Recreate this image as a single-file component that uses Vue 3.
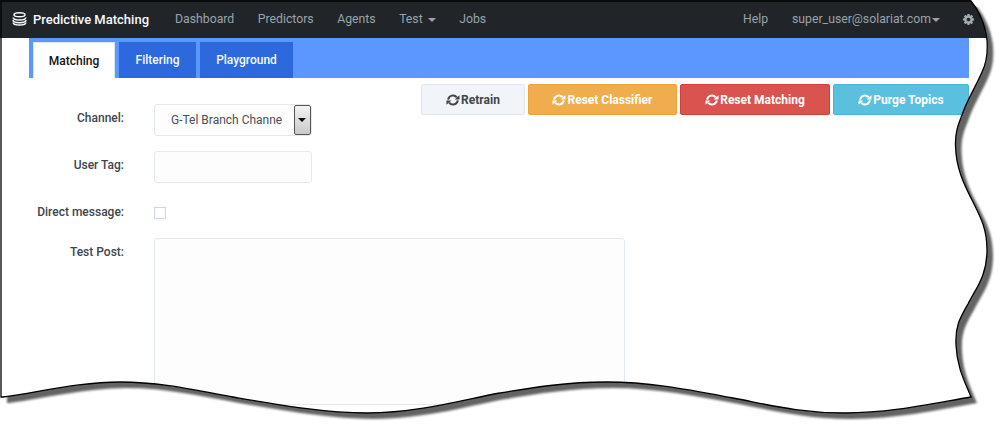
<script setup>
const navItems = [
  { label: 'Dashboard' },
  { label: 'Predictors' },
  { label: 'Agents' },
  { label: 'Test', caret: true },
  { label: 'Jobs' }
]

const tabs = ['Matching', 'Filtering', 'Playground']

const actions = [
  { label: 'Retrain', kind: 'light' },
  { label: 'Reset Classifier', kind: 'warning' },
  { label: 'Reset Matching', kind: 'danger' },
  { label: 'Purge Topics', kind: 'info' }
]

// torn paper edge of the screenshot, right side then bottom
const edge =
  'L971 1 C977 8 985 22 987 40 C988 54 986 64 982 72 C976 86 967 100 962 115 C958 125 955 133 955.500 146 C956 170 966 188 972 200 C980 216 987 228 987 250 C987 276 976 288 968 304 C960 318 955 326 956 345 C957 368 965 382 971 397 C930 404 890 413 845 413 C800 413 770 405 733 398 C690 390 650 382 607 382 C565 382 530 388 500 393 C470 398 420 413 367 413 C325 413 280 405 233 397 C195 390 160 382 120 382 C80 382 40 392 3 397'
const pagePath = `M1 1 ${edge} L1 397 Z`
const outerPath = `M971 0 ${edge} L0 397 L0 430 L1004 430 L1004 0 Z`
</script>

<template>
  <div class="shot">
    <header class="navbar">
      <div class="brand">
        <svg class="brand-icon" viewBox="0 0 15 14" width="15" height="14">
          <g fill="none" stroke="#f8f9fa" stroke-width="1.500">
            <ellipse cx="7.500" cy="2.800" rx="5.500" ry="2" />
            <path d="M1.200 5.500c0 1.500 2.800 2.500 6.300 2.500s6.300-1 6.300-2.500" />
            <path d="M1 8c0 1.600 2.900 2.700 6.500 2.700S14 9.600 14 8" />
            <path d="M1.200 10.500c0 1.500 2.800 2.500 6.300 2.500s6.300-1 6.300-2.500" />
          </g>
        </svg>
        <span>Predictive Matching</span>
      </div>
      <nav class="nav-links">
        <span v-for="item in navItems" :key="item.label" class="nav-link">
          {{ item.label }}<i v-if="item.caret" class="caret"></i>
        </span>
      </nav>
      <div class="nav-right">
        <span class="nav-link">Help</span>
        <span class="nav-link user">super_user@solariat.com<i class="caret tight"></i></span>
        <svg class="gear" viewBox="0 0 1792 1792" width="13" height="13">
          <path
            fill="#a4abb3"
            d="M1152 896q0-106-75-181t-181-75-181 75-75 181 75 181 181 75 181-75 75-181zm512-109v222q0 12-8 23t-20 13l-185 28q-19 54-39 91 35 50 107 138 10 12 10 25t-9 23q-27 37-99 108t-94 71q-12 0-26-9l-138-108q-44 23-91 38-16 136-29 186-7 28-36 28h-222q-14 0-24.500-8.500t-11.500-21.500l-28-184q-49-16-90-37l-141 107q-10 9-25 9-14 0-25-11-126-114-165-168-7-10-7-23 0-12 8-23 15-21 51-66.500t54-70.500q-27-50-41-99l-183-27q-13-2-21-12.500t-8-23.500v-222q0-12 8-23t19-13l186-28q14-46 39-92-40-57-107-138-10-12-10-24 0-10 9-23 26-36 98.500-107.500t94.500-71.500q13 0 26 10l138 107q44-23 91-38 16-136 29-186 7-28 36-28h222q14 0 24.500 8.500t11.500 21.500l28 184q49 16 90 37l142-107q9-9 24-9 13 0 25 10 129 119 165 170 7 8 7 22 0 12-8 23-15 21-51 66.500t-54 70.500q26 50 41 98l183 28q13 2 21 12.500t8 23.500z"
          />
        </svg>
      </div>
    </header>

    <main class="content">
      <div class="tab-bar">
        <button
          v-for="(tab, index) in tabs"
          :key="tab"
          type="button"
          :class="['tab', { active: index === 0 }]"
        >
          {{ tab }}
        </button>
      </div>

      <div class="actions">
        <button
          v-for="action in actions"
          :key="action.label"
          type="button"
          :class="['action', action.kind]"
        >
          <svg viewBox="0 0 14 14" width="14" height="14">
            <g fill="none" stroke="currentColor" stroke-width="2">
              <path d="M2.200 6.600A4.800 4.800 0 0 1 10.800 4.400" />
              <path d="M11.800 7.400A4.800 4.800 0 0 1 3.200 9.600" />
            </g>
            <path fill="currentColor" d="M8.600 6.500H13.500V2.200zM5.400 7.500H.500V11.800z" />
          </svg>
          {{ action.label }}
        </button>
      </div>

      <form class="form">
        <label class="label channel-label">Channel:</label>
        <div class="select">
          <span class="select-text">G-Tel Branch Channel</span>
          <span class="select-btn"><i></i></span>
        </div>

        <label class="label tag-label">User Tag:</label>
        <input class="field tag-input" type="text" />

        <label class="label dm-label">Direct message:</label>
        <input class="check" type="checkbox" />

        <label class="label post-label">Test Post:</label>
        <textarea class="field post-input"></textarea>
      </form>
    </main>

    <svg class="torn" width="1004" height="430" viewBox="0 0 1004 430">
      <defs>
        <filter id="blur" x="-5%" y="-5%" width="110%" height="110%">
          <feGaussianBlur stdDeviation="1.100" />
        </filter>
        <clipPath id="outside">
          <path :d="outerPath" />
        </clipPath>
      </defs>
      <path :d="outerPath" fill="#fff" />
      <g clip-path="url(#outside)">
        <path :d="pagePath" transform="translate(6 6)" fill="#636363" filter="url(#blur)" />
      </g>
      <path :d="pagePath" fill="none" stroke="#000" stroke-width="1.300" />
    </svg>
  </div>
</template>

<style>
html,
body {
  margin: 0;
  background: #fff;
  overflow: hidden;
}
</style>

<style scoped>
.shot {
  position: relative;
  width: 1004px;
  height: 430px;
  overflow: hidden;
  background: #fff;
  font-family: Roboto, "Liberation Sans", sans-serif;
  font-size: 12px;
}

.navbar {
  display: flex;
  align-items: center;
  height: 38px;
  padding: 0 29px 0 12px;
  background: #212529;
  color: #9aa3ab;
  font-size: 12.250px;
}

.brand {
  display: flex;
  align-items: center;
  gap: 6px;
  color: #f8f9fa;
  font-size: 13px;
  font-weight: 500;
}

.nav-links {
  display: flex;
  gap: 23.500px;
  margin-left: 26px;
}

.nav-right {
  display: flex;
  align-items: center;
  margin-left: auto;
}

.user {
  margin-left: 24px;
}

.gear {
  margin-left: 22px;
}

.caret {
  display: inline-block;
  margin-left: 5px;
  vertical-align: middle;
  border-top: 4px solid #9aa3ab;
  border-left: 4px solid transparent;
  border-right: 4px solid transparent;
}

.caret.tight {
  margin-left: 1px;
}

.content {
  padding: 0 35px 0 29px;
}

.tab-bar {
  display: flex;
  gap: 4px;
  align-items: flex-end;
  height: 40px;
  padding-left: 4px;
  background: #5b97ff;
}

.tab {
  width: 77px;
  height: 36px;
  padding: 0;
  border: 0;
  background: #2d69dc;
  color: #f8f9fa;
  font: 500 12px Roboto, "Liberation Sans", sans-serif;
}

.tab:last-child {
  width: 93px;
}

.tab.active {
  width: 82px;
  background: #fff;
  border: 1px solid #dee6f2;
  border-bottom: 0;
  color: #111;
}

.actions {
  display: flex;
  justify-content: flex-end;
  gap: 3px;
  margin-top: 6px;
  height: 31px;
}

.action {
  display: flex;
  align-items: center;
  justify-content: center;
  gap: 1px;
  height: 31px;
  padding: 0;
  border: 1px solid;
  border-radius: 2px;
  color: #fff;
  font: 700 12px Roboto, "Liberation Sans", sans-serif;
}

.action.light {
  width: 104px;
  background: #f1f4f8;
  border-color: #dfe5ec;
  color: #3f454b;
}

.action.warning {
  width: 149px;
  background: #f0ad4e;
  border-color: #eea236;
}

.action.danger {
  width: 150px;
  background: #d9534f;
  border-color: #d43f3a;
}

.action.info {
  width: 136px;
  background: #5bc0de;
  border-color: #46b8da;
}

.form {
  display: grid;
  grid-template-columns: 95px 158px 313px;
  column-gap: 30px;
  align-items: start;
  margin-top: -11px;
}

.label {
  grid-column: 1;
  color: #3f454b;
  font-weight: 500;
  line-height: 14px;
  text-align: right;
  white-space: nowrap;
}

.channel-label {
  padding-top: 7px;
}

.tag-label {
  padding-top: 7px;
}

.dm-label {
  padding-top: 1px;
}

.post-label {
  padding-top: 7px;
}

.select {
  grid-column: 2;
  position: relative;
  box-sizing: border-box;
  height: 32px;
  margin-bottom: 15px;
  padding: 0 29px 0 16px;
  border: 1px solid #e4e8f0;
  border-radius: 3px;
  background: #fdfdfe;
  color: #495057;
  line-height: 31px;
  white-space: nowrap;
  overflow: hidden;
}

.select-text {
  display: block;
  overflow: hidden;
}

.select-btn {
  position: absolute;
  top: 0;
  right: 0;
  box-sizing: border-box;
  width: 17px;
  height: 30px;
  border: 1px solid #555;
  border-radius: 2px;
  background: linear-gradient(#f4f4f4, #c9c9c9);
}

.select-btn i {
  position: absolute;
  top: 12px;
  left: 3px;
  border-top: 4px solid #000;
  border-left: 4px solid transparent;
  border-right: 4px solid transparent;
}

.field {
  display: block;
  grid-column: 2;
  box-sizing: border-box;
  margin: 0;
  border: 1px solid #e4e8f0;
  border-radius: 3px;
  background: #fdfdfe;
  outline: 0;
  resize: none;
}

.tag-input {
  width: 158px;
  height: 32px;
  margin-bottom: 21px;
}

.check {
  grid-column: 2;
  appearance: none;
  box-sizing: border-box;
  width: 12px;
  height: 12px;
  margin: 3px 0 19px;
  border: 1px solid #cfd6e0;
  background: #fff;
}

.post-input {
  grid-column: 2 / 4;
  width: 471px;
  height: 167px;
}

.torn {
  position: absolute;
  top: 0;
  left: 0;
  pointer-events: none;
}
</style>
